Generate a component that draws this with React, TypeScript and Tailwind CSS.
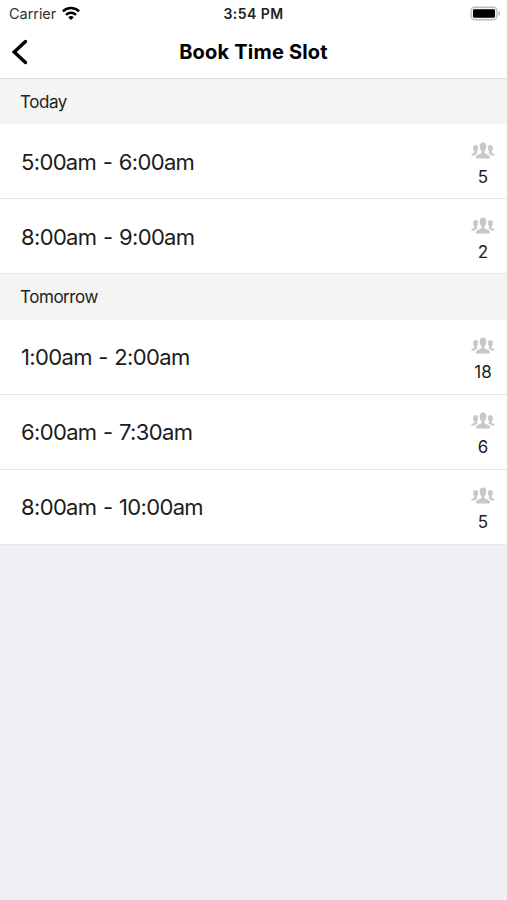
import React from 'react';

interface Slot {
  time: string;
  count: number;
}

interface Section {
  title: string;
  slots: Slot[];
}

const SECTIONS: Section[] = [
  {
    title: 'Today',
    slots: [
      { time: '5:00am - 6:00am', count: 5 },
      { time: '8:00am - 9:00am', count: 2 },
    ],
  },
  {
    title: 'Tomorrow',
    slots: [
      { time: '1:00am - 2:00am', count: 18 },
      { time: '6:00am - 7:30am', count: 6 },
      { time: '8:00am - 10:00am', count: 5 },
    ],
  },
];

const PeopleIcon: React.FC = () => (
  <svg className="h-[17px] w-6 shrink-0" viewBox="0 0 24 17" fill="#c8c8c8">
    <path d="M12 .4c-2.300 0-3.500 1.700-3.300 4 .1 1.500.5 3.200 1.500 4.300.6.7.5 2.300-.1 2.800-1 .8-4.700 1.100-5.200 3.800-.1.700.2 1.200.7 1.200h12.800c.5 0 .8-.5.7-1.200-.5-2.700-4.200-3-5.200-3.800-.6-.5-.7-2.100-.1-2.800 1-1.100 1.400-2.800 1.500-4.300.2-2.300-1-4-3.300-4z" />
    <path d="M4.600 3c-1.700 0-2.700 1.400-2.500 3.200.1 1.200.5 2.300 1.100 3 .4.500.3 1.600-.2 1.900-.9.600-2.700.7-2.900 2.400h3.800c.6-1.100 1.700-1.700 2.900-2.100-.8-.3-1.300-1.200-.8-2.200.6-.7 1-1.800 1.100-3C7.300 4.400 6.300 3 4.600 3z" />
    <path d="M19.400 3c1.700 0 2.700 1.400 2.500 3.200-.1 1.200-.5 2.300-1.100 3-.4.500-.3 1.600.2 1.900.9.600 2.700.7 2.900 2.400h-3.800c-.6-1.100-1.700-1.700-2.900-2.100.8-.3 1.300-1.200.8-2.200-.6-.7-1-1.800-1.100-3-.2-1.800.8-3.200 2.500-3.200z" />
  </svg>
);

const StatusBar: React.FC = () => (
  <div className="grid h-7 grid-cols-3 items-center px-[7px] text-[#222]">
    <div className="flex items-center gap-[6px] pl-0.5">
      <span className="text-[14.5px] leading-none tracking-[-0.05px] text-[#333]">Carrier</span>
      <svg className="-mt-[3px] h-[14px] w-[18px]" viewBox="0 0 18 14" fill="none" stroke="#000" strokeWidth="2.5">
        <path d="M.9 5.300a11.700 11.700 0 0 1 16.200 0" />
        <path d="M4 8.800a7.300 7.300 0 0 1 10 0" />
        <path d="M9 14 6.200 11.300a4 4 0 0 1 5.600 0z" fill="#000" stroke="none" />
      </svg>
    </div>
    <span className="text-center text-[14px] font-semibold leading-none tracking-[0.45px]">3:54 PM</span>
    <svg className="-mt-0.5 -mr-px h-[15px] w-[31px] justify-self-end" viewBox="0 0 31 15">
      <rect x="1" y="1.200" width="26" height="12.600" rx="3.800" fill="#f4f4f4" stroke="#bdbdbd" strokeWidth="1.400" />
      <rect x="3" y="3.200" width="22" height="8.600" rx="1.400" fill="#000" />
      <path d="M28.600 5.200v4.600c1.900-.6 1.900-4 0-4.600z" fill="#aaa" />
    </svg>
  </div>
);

const NavBar: React.FC = () => (
  <div className="grid h-[51px] grid-cols-[60px_1fr_60px] items-center border-b border-[#dedede] pb-0.5">
    <button className="pl-[11px]" aria-label="Back">
      <svg className="h-[28px] w-[18px]" viewBox="0 0 18 28" fill="none" stroke="#000" strokeWidth="3.4" strokeLinecap="round">
        <path d="M14.500 3.500 3.200 14l11.300 10.500" />
      </svg>
    </button>
    <h1 className="text-center text-[20px] font-bold tracking-[0.2px] text-black">Book Time Slot</h1>
  </div>
);

const SlotRow: React.FC<{ slot: Slot }> = ({ slot }) => (
  <li className="flex h-[75px] items-center justify-between border-b border-[#e6e6e6] bg-white pl-[21px] pr-[12px] [section+section_&]:pb-0.5">
    <span className="pt-0.5 text-[22px] tracking-[-0.65px] text-[#1c1c1c] [word-spacing:1px]">{slot.time}</span>
    <div className="flex w-6 flex-col items-center gap-[5px] pt-[11px]">
      <PeopleIcon />
      <span className="text-[17px] leading-[27px] text-[#1c1c1c]">{slot.count}</span>
    </div>
  </li>
);

export default function App() {
  return (
    <div className="flex min-h-screen flex-col bg-[#efeff4] font-['Inter',sans-serif]">
      <header className="bg-white">
        <StatusBar />
        <NavBar />
      </header>
      <main>
        {SECTIONS.map((section) => (
          <section key={section.title}>
            <h2 className="flex h-[45px] items-center bg-[#f4f4f4] pl-5 pt-0.5 text-[17px] tracking-[-0.45px] text-[#222] [section+section>&]:h-[46px]">
              {section.title}
            </h2>
            <ul>
              {section.slots.map((slot) => (
                <SlotRow key={slot.time} slot={slot} />
              ))}
            </ul>
          </section>
        ))}
      </main>
    </div>
  );
}
